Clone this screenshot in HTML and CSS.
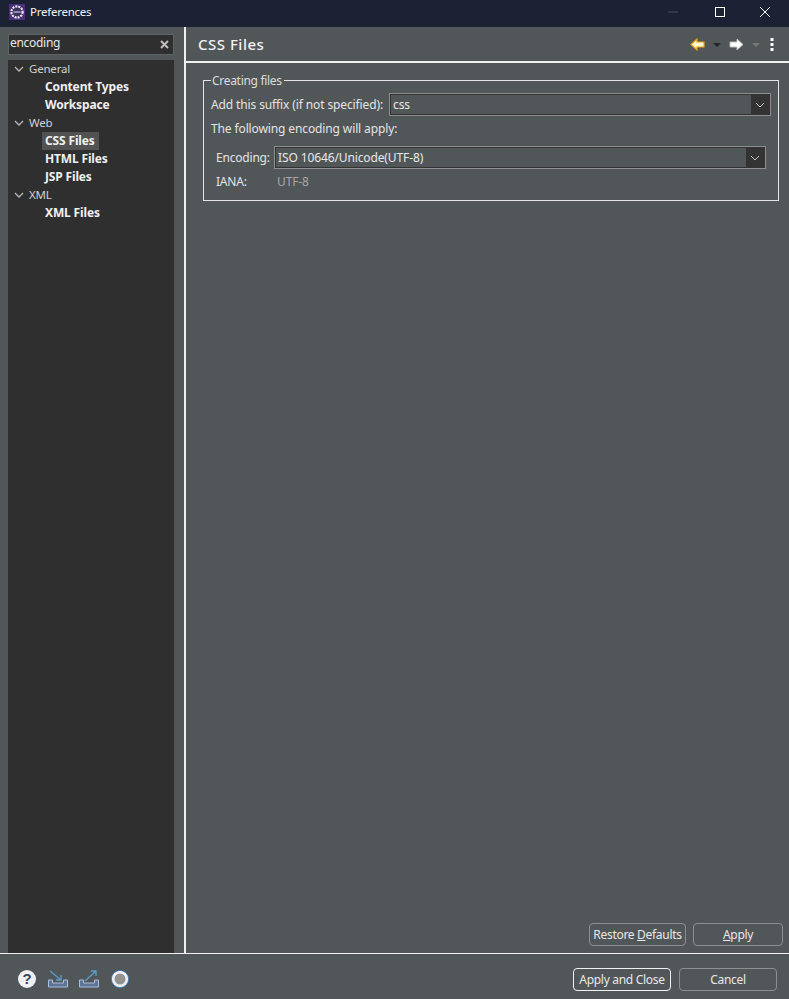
FILE: index.html
```html
<!DOCTYPE html>
<html lang="en">
<head>
<meta charset="utf-8">
<title>Preferences</title>
<link rel="stylesheet" href="styles.css">
</head>
<body>
<div class="window">
  <header class="titlebar">
    <svg class="app-icon" width="16" height="16" viewBox="0 0 16 16"><rect width="16" height="16" fill="#4a2f7a"/><circle cx="8" cy="8" r="5.6" fill="none" stroke="#e8e8ee" stroke-width="2.2" stroke-dasharray="2 1"/><circle cx="8" cy="8" r="4" fill="#3a3550"/><rect x="4.5" y="7" width="7" height="2" fill="#8f86c0"/></svg>
    <span class="title-text">Preferences</span>
    <div class="win-controls">
      <svg class="win-btn" width="12" height="12" viewBox="0 0 12 12"><path d="M1 6h10" stroke="#4a4e60" fill="none"/></svg>
      <svg class="win-btn" width="12" height="12" viewBox="0 0 12 12"><rect x="1.5" y="1.5" width="9" height="9" fill="none" stroke="#fff"/></svg>
      <svg class="win-btn" width="12" height="12" viewBox="0 0 12 12"><path d="M1 1l10 10M11 1L1 11" stroke="#fff" fill="none"/></svg>
    </div>
  </header>
  <div class="body">
    <aside class="sidebar">
      <div class="search"><span>encoding</span>
        <svg width="9" height="9" viewBox="0 0 9 9"><path d="M1 1l7 7M8 1L1 8" stroke="#bdbdbd" stroke-width="2" fill="none"/></svg>
      </div>
      <div class="tree">
        <div class="node"><svg class="twisty" width="10" height="6" viewBox="0 0 10 6"><path d="M1 1l4 4 4-4" stroke="#b8b8b8" stroke-width="1.3" fill="none"/></svg>General</div>
        <div class="leaf"><span>Content Types</span></div>
        <div class="leaf"><span>Workspace</span></div>
        <div class="node"><svg class="twisty" width="10" height="6" viewBox="0 0 10 6"><path d="M1 1l4 4 4-4" stroke="#b8b8b8" stroke-width="1.3" fill="none"/></svg>Web</div>
        <div class="leaf"><span class="selected">CSS Files</span></div>
        <div class="leaf"><span>HTML Files</span></div>
        <div class="leaf"><span>JSP Files</span></div>
        <div class="node"><svg class="twisty" width="10" height="6" viewBox="0 0 10 6"><path d="M1 1l4 4 4-4" stroke="#b8b8b8" stroke-width="1.3" fill="none"/></svg>XML</div>
        <div class="leaf"><span>XML Files</span></div>
      </div>
    </aside>
    <main class="content">
      <div class="page-head">
        <h1>CSS Files</h1>
        <div class="nav-tools">
          <svg width="15" height="13" viewBox="0 0 15 13"><path d="M1 6.5L7 1v3h7v5H7v3z" fill="#fff6d0" stroke="#e8a317" stroke-width="1.2"/></svg>
          <svg class="drop" width="8" height="4" viewBox="0 0 8 4"><path d="M0 0h8L4 4z" fill="#252525"/></svg>
          <svg class="fwd" width="15" height="13" viewBox="0 0 15 13"><path d="M14 6.5L8 1v3H1v5h7v3z" fill="#fff" stroke="#bdbdbd"/></svg>
          <svg class="drop" width="8" height="4" viewBox="0 0 8 4"><path d="M0 0h8L4 4z" fill="#777"/></svg>
          <svg class="more" width="4" height="13" viewBox="0 0 4 13"><rect x="0.5" width="3" height="3" fill="#fff"/><rect x="0.5" y="5" width="3" height="3" fill="#fff"/><rect x="0.5" y="10" width="3" height="3" fill="#fff"/></svg>
        </div>
      </div>
      <div class="page-body">
        <fieldset class="group">
          <legend>Creating files</legend>
          <div class="row suffix-row">
            <label>Add this suffix (if not specified):</label>
            <div class="combo"><span>css</span><i class="combo-btn"><svg width="10" height="6" viewBox="0 0 10 6"><path d="M1 1l4 4 4-4" stroke="#c8c8c8" fill="none"/></svg></i></div>
          </div>
          <div class="note">The following encoding will apply:</div>
          <div class="encoding">
            <div class="row">
              <label class="enc-label">Encoding:</label>
              <div class="combo"><span>ISO 10646/Unicode(UTF-8)</span><i class="combo-btn"><svg width="10" height="6" viewBox="0 0 10 6"><path d="M1 1l4 4 4-4" stroke="#c8c8c8" fill="none"/></svg></i></div>
            </div>
            <div class="row iana"><label class="enc-label">IANA:</label><span class="muted">UTF-8</span></div>
          </div>
        </fieldset>
        <div class="page-actions">
          <button class="btn restore">Restore <u>D</u>efaults</button>
          <button class="btn apply"><u>A</u>pply</button>
        </div>
      </div>
    </main>
  </div>
  <footer class="footer">
    <div class="foot-icons">
      <svg class="ic-help" width="18" height="18" viewBox="0 0 18 18"><circle cx="9" cy="9" r="9" fill="#f0f0f4"/><text x="9" y="14" text-anchor="middle" class="q">?</text></svg>
      <svg class="ic-in" width="22" height="18" viewBox="0 0 22 18"><path d="M1.5 10v7h19v-7h-4v3h-11v-3z" fill="#5f7394" stroke="#a9bfe0"/><path d="M3 1l11 9M14 5v5H9" stroke="#5aa0c8" stroke-width="1.3" fill="none"/></svg>
      <svg class="ic-out" width="22" height="18" viewBox="0 0 22 18"><path d="M1.5 10v7h19v-7h-4v3h-11v-3z" fill="#5f7394" stroke="#a9bfe0"/><path d="M7 11l11-10M13 1h5v5" stroke="#5aa0c8" stroke-width="1.3" fill="none"/></svg>
      <svg class="ic-rec" width="18" height="18" viewBox="0 0 18 18"><circle cx="9" cy="9" r="8.6" fill="#f0f0f4" stroke="#2d79b5" stroke-width="0.8"/><circle cx="9" cy="9" r="5.5" fill="#929292"/></svg>
    </div>
    <div class="foot-actions">
      <button class="btn primary">Apply and Close</button>
      <button class="btn cancel">Cancel</button>
    </div>
  </footer>
</div>
</body>
</html>
```
FILE: styles.css
```css
* { box-sizing: border-box; }
html, body { margin: 0; height: 100%; }
body { background: #515658; color: #e8e8e8; font: 12px/18px "Noto Sans", "Open Sans", sans-serif; letter-spacing: -0.12px; overflow: hidden; }
.window { width: 789px; height: 999px; display: flex; flex-direction: column; }
.titlebar { height: 27px; background: #1c2133; display: flex; align-items: center; padding: 0 0 3px 9px; flex: none; }
.app-icon { flex: none; }
.title-text { margin-left: 5px; color: #f2f2f2; font-size: 11.5px; letter-spacing: -0.25px; }
.win-controls { margin-left: auto; display: flex; gap: 34px; padding-right: 18px; }
.win-btn:nth-child(2) { position: relative; left: 1px; }
.body { flex: 1; display: flex; min-height: 0; border-bottom: 1px solid #f0f0f0; height: 926px; }
.sidebar { width: 186px; flex: none; border-right: 2px solid #f0f0f0; padding: 7px 10px 0 8px; display: flex; flex-direction: column; }
.search { height: 21px; background: #2f2f2f; border: 1px solid #5e6364; display: flex; align-items: center; justify-content: space-between; padding: 0 4px 3px 1px; color: #e6e6e6; flex: none; letter-spacing: -0.3px; }
.search svg { position: relative; top: 1px; }
.tree { flex: 1; margin-top: 5px; background: #2f2f2f; }
.node, .leaf { height: 18px; display: flex; align-items: center; white-space: nowrap; }
.node { color: #cfd2d4; padding-left: 6px; font-size: 11.5px; letter-spacing: -0.2px; line-height: 16px; padding-bottom: 1px; }
.twisty { margin-right: 5px; }
.leaf { padding-left: 34px; font-weight: 700; color: #f0f0f0; letter-spacing: -0.15px; }
.leaf span { padding: 0 3px; height: 18px; }
.leaf .selected { background: #525252; padding-right: 4px; }
.content { flex: 1; display: flex; flex-direction: column; min-width: 0; }
.page-head { height: 36px; display: flex; align-items: center; justify-content: space-between; border-bottom: 2px solid #f0f0f0; padding: 1px 15px 0 12px; flex: none; }
h1 { margin: -2px 0 0; font-size: 15px; font-weight: 500; color: #f2f2f2; letter-spacing: 0.5px; }
.nav-tools { display: flex; align-items: center; }
.drop { margin-left: 8px; }
.fwd { margin-left: 8px; }
.more { margin-left: 10px; }
.page-body { flex: 1; display: flex; flex-direction: column; padding: 9px 6px 7px 17px; min-height: 0; }
.group { margin: 0; height: 129px; border: 1px solid #e4e4e4; padding: 5px 0 0 7px; width: 576px; min-width: 0; }
legend { padding: 0 2px 0 1px; margin-left: 0; color: #dcdcdc; line-height: 16px; letter-spacing: -0.3px; position: relative; top: 1px; }
.row { display: flex; align-items: center; }
.suffix-row { width: 560px; }
label { color: #e4e4e4; white-space: nowrap; }
.suffix-row label { margin-right: 6px; }
.combo { flex: 1; height: 23px; border: 1px solid #8e8e8e; background: #515658; box-shadow: inset 0 0 0 1px #333; display: flex; align-items: center; justify-content: space-between; color: #e8e8e8; padding: 1px 1px 1px 3px; }
.combo-btn { width: 18px; height: 19px; background: #333; display: flex; align-items: center; justify-content: center; margin-right: 0; }
.note { margin-top: 4px; height: 18px; color: #e4e4e4; }
.encoding { margin-top: 8px; padding-left: 5px; width: 555px; }
.enc-label { width: 58px; flex: none; letter-spacing: -0.2px; }
.iana { margin-top: 4px; }
.iana .enc-label { width: 61px; }
.muted { color: #a4a8aa; }
.page-actions { margin-top: auto; display: flex; justify-content: flex-end; gap: 7px; }
.btn { height: 23px; border: 1px solid #8b8f91; border-radius: 4px; background: transparent; color: #e8e8e8; font: inherit; letter-spacing: -0.3px; padding: 0; }
.restore { width: 97px; }
.apply { width: 90px; }
.footer { height: 46px; display: flex; align-items: center; justify-content: space-between; padding: 5px 12px 0 18px; flex: none; border-top: 1px solid #f0f0f0; margin-top: -1px; }
.foot-icons { display: flex; align-items: center; }
.ic-in { margin-left: 11px; }
.ic-out { margin-left: 9px; }
.ic-rec { margin-left: 11px; }
.q { font: 700 15px "Liberation Sans", sans-serif; fill: #3a4560; }
.foot-actions { display: flex; gap: 8px; }
.foot-actions .btn { padding-top: 2px; }
.primary { width: 98px; border-color: #f0f0f0; }
.cancel { width: 98px; }
```
